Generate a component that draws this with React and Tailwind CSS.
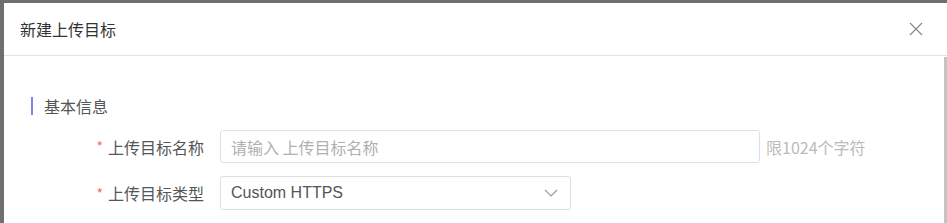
import React from 'react';

const font = { fontFamily: '"Noto Sans CJK SC", "Liberation Sans", sans-serif' };

const Label = ({ children }) => (
  <div className="w-[216px] shrink-0 flex justify-end items-center pr-4 text-[16px] text-[#555]">
    <span className="text-[#f56c6c] mr-[5px] text-[14px]">*</span>
    {children}
  </div>
);

const App = () => {
  return (
    <div className="w-[947px] h-[223px] bg-[#6f6f71] pt-[3px] pl-[4px] overflow-hidden" style={font}>
      <div className="bg-white h-full flex flex-col">
        <div className="h-[53px] shrink-0 flex items-center justify-between pl-4 pr-6 border-b border-[#e2e2e2]">
          <span className="text-[16px] text-[#333] leading-none">新建上传目标</span>
          <svg width="14" height="14" viewBox="0 0 14 14" className="text-[#888]">
            <path d="M1 1L13 13M13 1L1 13" stroke="currentColor" strokeWidth="1.2" fill="none" />
          </svg>
        </div>
        <div className="flex flex-1 min-h-0">
          <div className="flex-1 pt-[41px]">
            <div className="flex items-center pl-[27px] h-[18px]">
              <div className="w-[2px] h-[18px] bg-[#7b84f2]" />
              <span className="ml-[11px] text-[16px] text-[#555] leading-none">基本信息</span>
            </div>
            <div className="mt-[15px] flex items-center h-[33px]">
              <Label>上传目标名称</Label>
              <div className="w-[540px] h-[33px] border border-[#dcdfe6] rounded-[3px] flex items-center px-[10px] text-[16px] text-[#b0b0b0]">
                请输入 上传目标名称
              </div>
              <span className="ml-[6px] text-[16px] text-[#bbbbbb]">限1024个字符</span>
            </div>
            <div className="mt-[13px] flex items-center h-[34px]">
              <Label>上传目标类型</Label>
              <div className="w-[351px] h-[34px] border border-[#dcdfe6] rounded-[3px] flex items-center justify-between pl-[10px] pr-[12px] text-[16px] text-[#555]">
                <span style={{ fontFamily: '"Liberation Sans", "Noto Sans CJK SC", sans-serif' }}>Custom HTTPS</span>
                <svg width="14" height="8" viewBox="0 0 14 8" className="text-[#999]">
                  <path d="M1 1L7 7L13 1" stroke="currentColor" strokeWidth="1.1" fill="none" />
                </svg>
              </div>
            </div>
          </div>
          <div className="w-[3px] bg-[#c4c4c4] mt-[1px]" />
        </div>
      </div>
    </div>
  );
};

export default App;
